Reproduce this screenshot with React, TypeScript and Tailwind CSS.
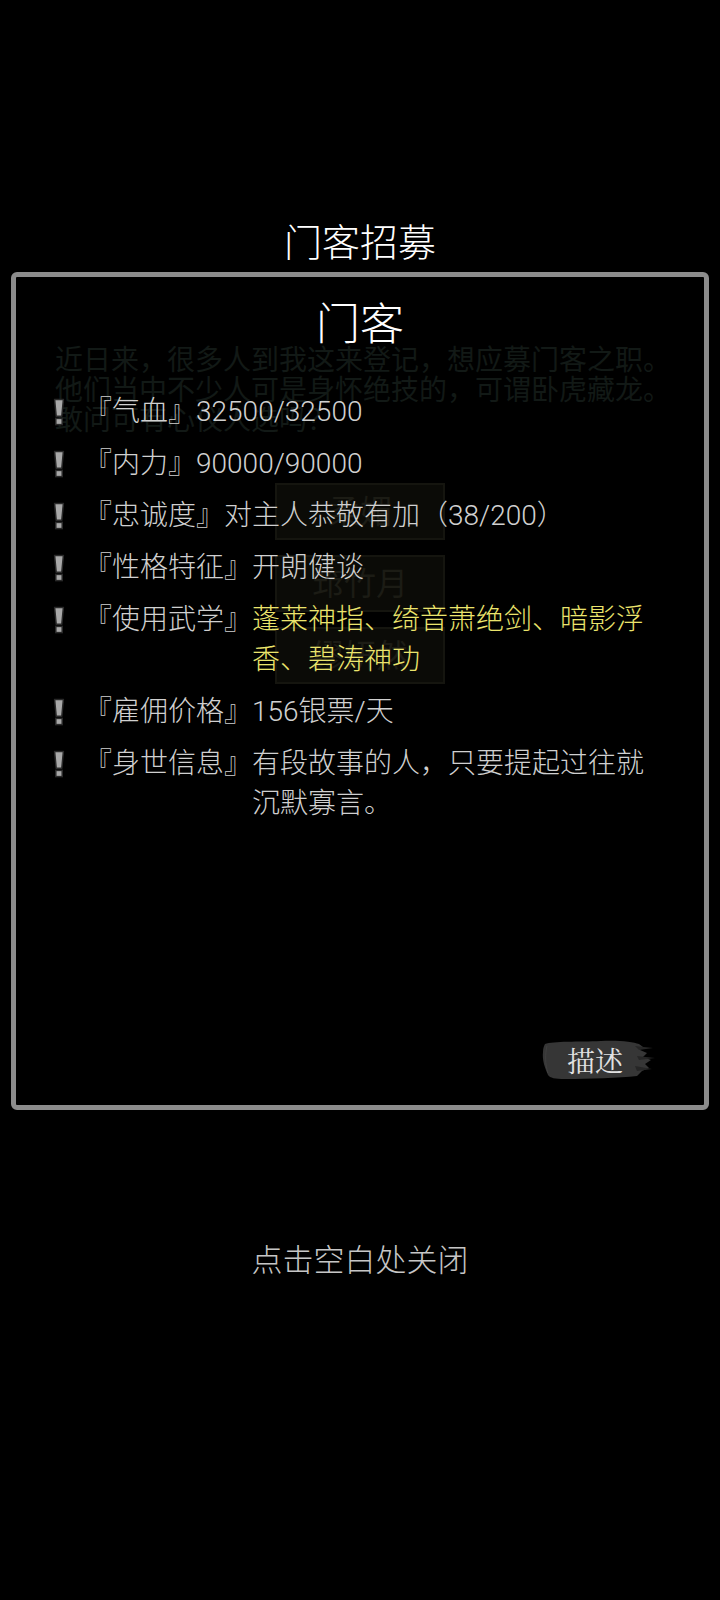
import React from "react";

type Stat = {
  label: string;
  value: string;
  tone?: "plain" | "skill";
};

const STATS: Stat[] = [
  { label: "『气血』", value: "32500/32500" },
  { label: "『内力』", value: "90000/90000" },
  { label: "『忠诚度』", value: "对主人恭敬有加（38/200）" },
  { label: "『性格特征』", value: "开朗健谈" },
  { label: "『使用武学』", value: "蓬莱神指、绮音萧绝剑、暗影浮香、碧涛神功", tone: "skill" },
  { label: "『雇佣价格』", value: "156银票/天" },
  { label: "『身世信息』", value: "有段故事的人，只要提起过往就沉默寡言。" },
];

const CANDIDATES = ["柔媚", "筇竹月", "缪妍然"];

const FONT = "font-['Roboto','Noto_Sans_CJK_SC',sans-serif]";

// bold exclamation mark with a dark rim
function Bang() {
  return (
    <svg width="14" height="28" viewBox="0 0 14 28" className="block">
      <path d="M2.6 1.5 H11.4 L9.8 18.2 H4.2 Z" fill="#a8a8a8" stroke="#2a2a2a" strokeWidth="1.5" strokeLinejoin="round" />
      <rect x="3.8" y="20.4" width="6.4" height="6.2" fill="#a8a8a8" stroke="#2a2a2a" strokeWidth="1.5" />
    </svg>
  );
}

// ink brush stroke behind the 描述 button
function BrushStroke() {
  return (
    <svg width="118" height="44" viewBox="0 0 118 44" className="absolute inset-0">
      <path
        d="M6 6 C14 3 40 4 62 3 C80 2 94 4 100 6 L104 9 L101 12 L108 15 L104 19 L112 22 L106 26 L110 30 L103 33 L98 38 C80 40 50 41 26 41 C16 41 11 40 9 37 C6 30 3 22 4 14 C4 10 5 8 6 6 Z"
        fill="#363636"
      />
      <path d="M96 8 L114 10 L100 12 Z M98 18 L116 20 L100 22 Z M96 28 L113 31 L98 33 Z" fill="#262626" />
      <path d="M8 8 C6 16 6 26 9 35" stroke="#404040" strokeWidth="1" fill="none" />
    </svg>
  );
}

export default function App() {
  return (
    <div className={`relative w-[720px] h-[1600px] bg-black overflow-hidden ${FONT}`}>
      {/* dimmed recruitment screen underneath the popup */}
      <div className="absolute inset-0 pt-[346px] pl-[55px] text-[#121916]">
        <div className="w-[620px] text-[28px] leading-[30px]">
          近日来，很多人到我这来登记，想应募门客之职。他们当中不少人可是身怀绝技的，可谓卧虎藏龙。敢问可有心仪人选吗？
        </div>
        <div className="mt-[47px] ml-[220px] flex flex-col gap-[15px]">
          {CANDIDATES.map((name) => (
            <div
              key={name}
              className="w-[170px] h-[57px] border-2 border-[#15150f] bg-[#0b0b07] flex items-center justify-center text-[32px] text-[#1c1c15]"
            >
              {name}
            </div>
          ))}
        </div>
      </div>

      <div className="relative flex flex-col items-center pt-[219px]">
        <div className="text-[38px] leading-[48px] text-white font-light">门客招募</div>

        <div className="mt-[5px] w-[698px] h-[838px] border-[5px] border-[#8c8c8c] rounded-[6px] flex flex-col">
          <div className="pt-[20px] text-center text-[44px] leading-[56px] text-white font-light">门客</div>

          <div className="mt-[39px] flex flex-col gap-[12px] pr-[44px]">
            {STATS.map((s) => (
              <div key={s.label} className="flex text-[28px] leading-[40px]">
                <div className="ml-[36px] w-[14px] h-[40px] flex items-center shrink-0">
                  <Bang />
                </div>
                <span className="ml-[18px] shrink-0 text-[#d0d0d0] font-light">{s.label}</span>
                <span className={`flex-1 font-light ${s.tone === "skill" ? "text-[#ebe46c]" : "text-[#d0d0d0]"}`}>
                  {s.value}
                </span>
              </div>
            ))}
          </div>

          <div className="mt-auto mb-[23px] mr-[47px] flex justify-end">
            <button className="relative w-[118px] h-[44px] flex items-center justify-center">
              <BrushStroke />
              <span className="relative -ml-[6px] text-[28px] leading-none text-[#e2e2e2] font-['Noto_Serif_CJK_SC','AR_PL_UMing_CN',serif]">
                描述
              </span>
            </button>
          </div>
        </div>

        <div className="mt-[131px] text-[31px] leading-[40px] text-[#c6c6c6] font-light">点击空白处关闭</div>
      </div>
    </div>
  );
}
